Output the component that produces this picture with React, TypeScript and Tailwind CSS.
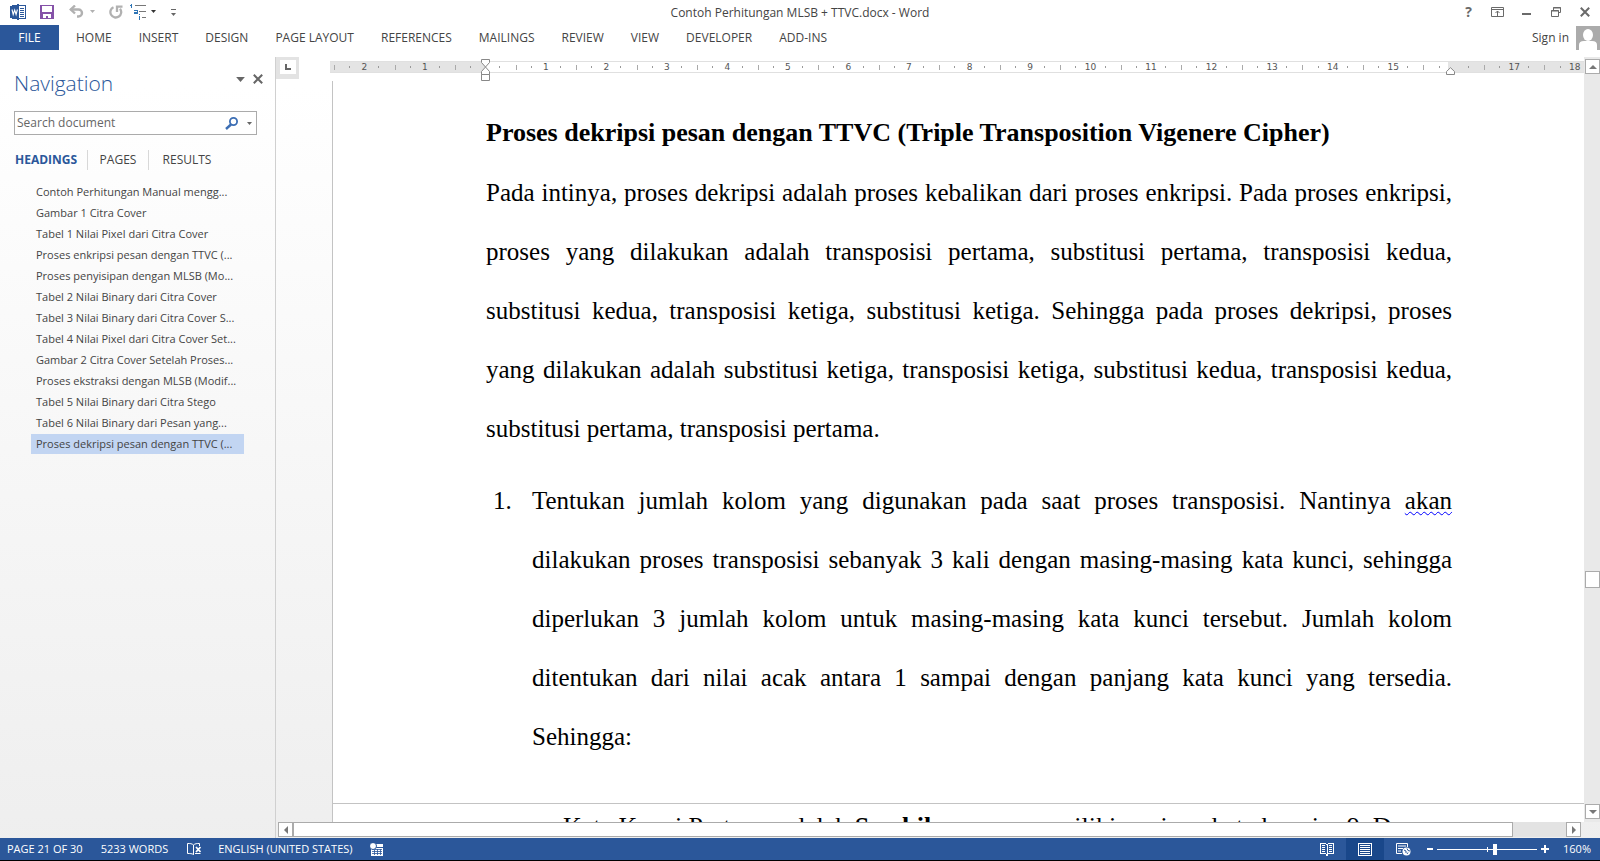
import type { ReactNode } from "react";

const tabs = [
  "HOME",
  "INSERT",
  "DESIGN",
  "PAGE LAYOUT",
  "REFERENCES",
  "MAILINGS",
  "REVIEW",
  "VIEW",
  "DEVELOPER",
  "ADD-INS",
];

const headings = [
  "Contoh Perhitungan Manual mengg...",
  "Gambar 1 Citra Cover",
  "Tabel 1 Nilai Pixel dari Citra Cover",
  "Proses enkripsi pesan dengan TTVC (...",
  "Proses penyisipan dengan MLSB (Mo...",
  "Tabel 2 Nilai Binary dari Citra Cover",
  "Tabel 3 Nilai Binary dari Citra Cover S...",
  "Tabel 4 Nilai Pixel dari Citra Cover Set...",
  "Gambar 2 Citra Cover Setelah Proses...",
  "Proses ekstraksi dengan MLSB (Modif...",
  "Tabel 5 Nilai Binary dari Citra Stego",
  "Tabel 6 Nilai Binary dari Pesan yang...",
  "Proses dekripsi pesan dengan TTVC (...",
];

// one cell per centimetre, centred on its number
const rulerCells = Array.from({ length: 21 }, (_, i) => Math.abs(i - 2));

function WordIcon() {
  return (
    <svg width="16" height="16" viewBox="0 0 16 16" shapeRendering="crispEdges">
      <rect x="8" y="1.5" width="7.5" height="13" fill="#fff" stroke="#2b579a" />
      <path d="M10 4.5h4M10 6.5h4M10 8.5h4M10 10.5h4M10 12.5h4" stroke="#2b579a" />
      <path d="M0 2l9-2v16l-9-2z" fill="#2b579a" />
      <path d="M2 5.5l1.2 5L4.7 6l1.4 4.5 1.3-5" fill="none" stroke="#fff" strokeWidth="1.1" shapeRendering="auto" />
    </svg>
  );
}

function SaveIcon() {
  return (
    <svg width="14" height="14" viewBox="0 0 14 14">
      <path d="M0 0h14v14H0z" fill="#8552a8" />
      <path d="M2 1h10v6H2zM3 9h8v4H8v-2H6v2H3z" fill="#fff" />
    </svg>
  );
}

function UndoIcon() {
  return (
    <svg width="15" height="13" viewBox="0 0 15 13" fill="none" stroke="#b1b1b1" strokeWidth="2.4">
      <path d="M1.5 4.500H9.500a3.500 3.500 0 010 7H8" />
      <path d="M6 .5L1.800 4.500 6 8.500" />
    </svg>
  );
}

function RedoIcon() {
  return (
    <svg width="14" height="14" viewBox="0 0 14 14" fill="none" stroke="#b1b1b1" strokeWidth="2.3">
      <path d="M4.500 2.200a5.400 5.400 0 106.500 1.500" />
      <path d="M8 7V1.600h5.500" />
    </svg>
  );
}

function ListIcon() {
  return (
    <svg width="17" height="16" viewBox="0 0 17 16" shapeRendering="crispEdges" fill="none">
      <path d="M0 1h2M1.500 0v4M4 6h3v3.500H4.500V8H7M9.500 10v1M9.500 12v4" stroke="#2e75b6" />
      <path d="M5 1.500h11M9 7.500h7M12 13.500h4" stroke="#777" />
    </svg>
  );
}

function Caret({ className = "text-[#666]" }: { className?: string }) {
  return (
    <svg width="7" height="4" viewBox="0 0 7 4" className={className}>
      <path d="M0 0h7L3.500 4z" fill="currentColor" />
    </svg>
  );
}

function ProofIcon() {
  return (
    <svg width="14" height="13" viewBox="0 0 14 13" fill="none" stroke="#fff">
      <path d="M6.500 11.500C5 10.500 3 10.500.5 10.500v-10c2.500 0 4.500 0 6 1.500zM6.500 2C8 .5 10 .5 12.500.5V3" />
      <path d="M9 4l4.500 5M13.500 4L9 9" strokeWidth="1.700" />
      <path d="M6.500 2v9.500M8 10.500h5.500" />
    </svg>
  );
}

function MacroIcon() {
  return (
    <svg width="13" height="13" viewBox="0 0 13 13">
      <path d="M6 1h7v3H6zM1 5h12v8H1z" fill="#fff" />
      <path d="M2 6.500h10M2 8.500h10M2 10.500h10M4.500 6v6M7.500 6v6M10.500 6v6" stroke="#2b579a" strokeWidth=".8" />
      <circle cx="3" cy="3" r="3.500" fill="#fff" stroke="#2b579a" />
    </svg>
  );
}

function ReadIcon() {
  return (
    <svg width="14" height="13" viewBox="0 0 14 13" fill="none" stroke="#fff" shapeRendering="crispEdges">
      <path d="M.5.500h5l1.500 1 1.500-1h5v10h-5l-1.500 2-1.500-2h-5zM7 2v11" />
      <path d="M2 2.500h3M2 4.500h3M2 6.500h3M2 8.500h3M9 2.500h3M9 4.500h3M9 6.500h3M9 8.500h3" />
    </svg>
  );
}

function PrintLayoutIcon() {
  return (
    <svg width="14" height="13" viewBox="0 0 14 13" fill="none" stroke="#fff" shapeRendering="crispEdges">
      <path d="M.5.5h13v12H.5z" />
      <path d="M2 2.500h10M2 4.500h10M2 6.500h10M2 8.500h10M2 10.500h10" />
    </svg>
  );
}

function WebLayoutIcon() {
  return (
    <svg width="15" height="13" viewBox="0 0 15 13" fill="none" stroke="#fff">
      <path d="M6 10.500H.5V.5h11V4M2 3h8M2 5.500h5M2 8h3" />
      <circle cx="10.500" cy="8.500" r="4" fill="#fff" stroke="none" />
      <path d="M8 7l2 1v2M11 5.500l1 2 2 .5M11 11l1-1.500" stroke="#2b579a" />
    </svg>
  );
}

function ScrollButton({ label, d }: { label: string; d: string }) {
  return (
    <button aria-label={label} className="flex size-[15px] shrink-0 items-center justify-center border border-[#ababab] bg-white">
      <svg width="8" height="8" viewBox="0 0 8 8">
        <path d={d} fill="#777" />
      </svg>
    </button>
  );
}

function TitleBar() {
  return (
    <header className="grid h-[25px] shrink-0 grid-cols-[1fr_auto_1fr] items-center">
      <div className="flex items-center pb-[2px] pl-[10px]">
        <WordIcon />
        <button aria-label="Save" className="ml-[14px]"><SaveIcon /></button>
        <button aria-label="Undo" className="ml-[15px]"><UndoIcon /></button>
        <button aria-label="Undo list" className="ml-[6px]"><Caret className="h-[3px] w-[5px] text-[#b1b1b1]" /></button>
        <button aria-label="Repeat" className="ml-[14px]"><RedoIcon /></button>
        <button aria-label="Multilevel list" className="ml-[7px] flex items-center gap-1">
          <ListIcon />
          <Caret className="h-[3px] w-[5px] text-[#333]" />
        </button>
        <button aria-label="Customize toolbar" className="ml-[15px] flex flex-col items-center gap-[3px] pt-[2px]">
          <span className="h-px w-[5px] bg-[#666]" />
          <Caret className="h-[3px] w-[5px] text-[#666]" />
        </button>
      </div>
      <h1>Contoh Perhitungan MLSB + TTVC.docx - Word</h1>
      <div className="flex items-center justify-end pr-[10px] pb-[2px] text-[#6a6a6a]">
        <button aria-label="Help" className="text-[14px] leading-4 font-bold">?</button>
        <button aria-label="Ribbon display options" className="ml-[19px]">
          <svg width="13" height="10" viewBox="0 0 13 10" fill="none" stroke="currentColor">
            <path d="M.5.5h12v9H.5zM1 2.500h11M6.500 9V4M4.500 6l2-2 2 2" />
          </svg>
        </button>
        <button aria-label="Minimize" className="ml-[18px]">
          <svg width="9" height="10" viewBox="0 0 9 10"><path d="M0 6h9v2H0z" fill="currentColor" /></svg>
        </button>
        <button aria-label="Restore" className="ml-[20px]">
          <svg width="10" height="10" viewBox="0 0 10 10" fill="none" stroke="currentColor">
            <path d="M2.500 3V.5h7v5H7.500M2 1h8M.5 3.500h7v6h-7zM0 4h8" />
          </svg>
        </button>
        <button aria-label="Close" className="ml-[19px]">
          <svg width="10" height="10" viewBox="0 0 10 10"><path d="M.8.8l8.400 8.400M9.200.8L.8 9.200" stroke="currentColor" strokeWidth="2" /></svg>
        </button>
      </div>
    </header>
  );
}

function TabBar() {
  return (
    <nav className="flex h-[25px] shrink-0 items-center">
      <button className="h-full w-[59px] bg-[#2b579a] text-white">FILE</button>
      <div className="flex gap-[27px] pl-[17px]">
        {tabs.map((tab) => (
          <button key={tab}>{tab}</button>
        ))}
      </div>
      <button className="ml-auto pr-[7px]">Sign in</button>
      <svg width="24" height="24" viewBox="0 0 24 24">
        <path d="M0 0h24v24H0z" fill="#ababab" />
        <ellipse cx="12" cy="9" rx="5" ry="6" fill="#fff" />
        <path d="M3 24v-5q0-4 5-4h8q5 0 5 4v5z" fill="#fff" />
      </svg>
    </nav>
  );
}

function NavigationPane() {
  return (
    <aside className="w-[276px] shrink-0 border-r border-[#d0d0d0] pl-[14px]">
      <div className="flex h-[52px] items-center">
        <h2 className="flex-1 text-[21px] leading-7 font-light text-[#2b579a]">Navigation</h2>
        <button aria-label="Pane options" className="pb-2"><Caret className="h-[5px] w-[9px] text-[#666]" /></button>
        <button aria-label="Close pane" className="mr-3 ml-[8px] pb-2">
          <svg width="10" height="10" viewBox="0 0 10 10"><path d="M.8.8l8.400 8.400M9.200.8L.8 9.200" stroke="#666" strokeWidth="2" /></svg>
        </button>
      </div>
      <div className="mt-[2px] flex h-6 w-[243px] items-center border border-[#ababab] bg-white pr-[4px] pl-[2px]">
        <input aria-label="Search document" placeholder="Search document" className="min-w-0 flex-1 outline-none placeholder:text-[#666]" />
        <button aria-label="Search">
          <svg width="14" height="13" viewBox="0 0 14 13" fill="none" stroke="#3c6eb4">
            <circle cx="8.500" cy="4.500" r="3.600" strokeWidth="1.800" />
            <path d="M6 7.500L1 12" strokeWidth="2.400" />
          </svg>
        </button>
        <button aria-label="Search options" className="ml-[8px]"><Caret className="h-[3px] w-[5px] text-[#666]" /></button>
      </div>
      <div className="mt-[15px] flex h-5 items-center" role="tablist">
        <button role="tab" className="w-[74px] border-r border-[#d8d8d8] pl-px text-left leading-5 font-bold text-[#2b579a]">HEADINGS</button>
        <button role="tab" className="w-[61px] border-r border-[#d8d8d8] leading-5">PAGES</button>
        <button role="tab" className="w-[76px] leading-5">RESULTS</button>
      </div>
      <ul className="mt-3 ml-[17px] w-[213px] text-[11px]">
        {headings.map((heading, i) => (
          <li key={heading} className="h-[21px]">
            <a
              href="#"
              className={
                i === headings.length - 1
                  ? "block h-5 bg-[#c2d5f2] pl-[5px] leading-5 whitespace-nowrap"
                  : "block h-5 pl-[5px] leading-5 whitespace-nowrap"
              }
            >
              {heading}
            </a>
          </li>
        ))}
      </ul>
    </aside>
  );
}

function Ruler() {
  return (
    <div className="flex h-6 shrink-0 items-start">
      <div className="flex h-[22px] w-[23px] shrink-0 items-start justify-center bg-[#e3e3e3] pt-[3px]">
        <button aria-label="Tab stop" className="flex h-[14px] w-4 items-center justify-center bg-white">
          <svg width="6" height="6" viewBox="0 0 6 6"><path d="M0 0h2v4h4v2H0z" fill="#666" /></svg>
        </button>
      </div>
      <div className="relative mt-1 ml-[31px] h-3 min-w-0 flex-1 border-y border-[#e0e0e0] bg-[#e4e4e4]">
        <div className="flex h-full overflow-hidden">
          <div className="ml-[156px] h-full w-[962px] shrink-0 bg-white" />
        </div>
        <div className="absolute inset-0 overflow-x-clip pl-1">
          <div className="grid h-full w-[1271px] grid-cols-[repeat(21,minmax(0,1fr))] font-['DejaVu_Sans',sans-serif] text-[9px] leading-[10px] text-[#555]">
            {rulerCells.map((n, i) => (
              <div key={i} className="flex items-center justify-between">
                <span className="h-[5px] w-px bg-[#aaa]" />
                <span className="h-[2px] w-px bg-[#999]" />
                <span className="flex w-0 justify-center">{n === 0 || n === 16 ? "" : n}</span>
                <span className="h-[2px] w-px bg-[#999]" />
                <span className="w-px" />
              </div>
            ))}
          </div>
        </div>
        <svg className="absolute -top-[3px] left-[151px]" width="10" height="22" viewBox="0 0 10 22" fill="#fff" stroke="#888">
          <path d="M.5.500h8v3l-4 4.500-4-4.500zM.5 15.500v-3L4.500 8l4 4.500v3zM.5 15.500h8v6h-8z" />
        </svg>
        <svg className="absolute top-[5px] left-[1116px]" width="10" height="9" viewBox="0 0 10 9" fill="#fff" stroke="#888">
          <path d="M.5 7.500v-3L4.500.7l4 3.800v3z" />
        </svg>
      </div>
    </div>
  );
}

// a full line, spread to both margins
function Line({ children }: { children: ReactNode }) {
  return <span className="block whitespace-nowrap [text-align-last:justify]">{children}</span>;
}

function DocumentPage() {
  return (
    <main className="ml-14 flex min-h-0 flex-1 flex-col overflow-hidden border-l border-[#c3c3c3] bg-white pl-[153px] font-['Liberation_Serif',serif] text-[25px] leading-[59px] text-black">
      <div className="w-[966px]">
        <h2 className="pt-[22px] text-[26px] font-bold whitespace-nowrap">Proses dekripsi pesan dengan TTVC (Triple Transposition Vigenere Cipher)</h2>
        <p className="pt-px">
          <Line>Pada intinya, proses dekripsi adalah proses kebalikan dari proses enkripsi. Pada proses enkripsi,</Line>
          <Line>proses yang dilakukan adalah transposisi pertama, substitusi pertama, transposisi kedua,</Line>
          <Line>substitusi kedua, transposisi ketiga, substitusi ketiga. Sehingga pada proses dekripsi, proses</Line>
          <Line>yang dilakukan adalah substitusi ketiga, transposisi ketiga, substitusi kedua, transposisi kedua,</Line>
          <span>substitusi pertama, transposisi pertama.</span>
        </p>
        <ol className="mt-[13px] list-none">
          <li className="flex pl-[7px]">
            <span className="w-[39px] shrink-0">1.</span>
            <p className="min-w-0 flex-1">
              <Line>
                Tentukan jumlah kolom yang digunakan pada saat proses transposisi. Nantinya{" "}
                <span className="underline decoration-[#0000ff] decoration-wavy decoration-1 underline-offset-2">akan</span>
              </Line>
              <Line>dilakukan proses transposisi sebanyak 3 kali dengan masing-masing kata kunci, sehingga</Line>
              <Line>diperlukan 3 jumlah kolom untuk masing-masing kata kunci tersebut. Jumlah kolom</Line>
              <Line>ditentukan dari nilai acak antara 1 sampai dengan panjang kata kunci yang tersedia.</Line>
              <span>Sehingga:</span>
            </p>
          </li>
        </ol>
      </div>
      <div className="mt-[37px] -ml-[153px] border-t border-[#c3c3c3] pl-[230px] text-[26px] leading-[46px] whitespace-nowrap">
        Kata Kunci Pertama adalah <b>Sembilan</b> yang memiliki panjang kata kunci = 9. Dan
      </div>
    </main>
  );
}

function StatusBar() {
  return (
    <footer className="flex h-[23px] shrink-0 items-center border-b border-black bg-[#2b579a] pl-[7px] text-[11px] text-white">
      <span>PAGE 21 OF 30</span>
      <span className="ml-[18px]">5233 WORDS</span>
      <button aria-label="Proofing" className="ml-[19px]"><ProofIcon /></button>
      <span className="ml-[17px]">ENGLISH (UNITED STATES)</span>
      <button aria-label="Macros" className="ml-[17px]"><MacroIcon /></button>
      <div className="ml-auto flex h-full items-center">
        <button aria-label="Read mode" className="flex h-full w-[38px] items-center justify-center"><ReadIcon /></button>
        <button aria-label="Print layout" className="flex h-full w-[38px] items-center justify-center bg-[#19478a]"><PrintLayoutIcon /></button>
        <button aria-label="Web layout" className="flex h-full w-[38px] items-center justify-center"><WebLayoutIcon /></button>
        <button aria-label="Zoom out" className="ml-[5px] h-[2px] w-[6px] bg-white" />
        <input
          type="range"
          aria-label="Zoom"
          min={0}
          max={100}
          defaultValue={58}
          className="mx-1 h-[11px] w-[100px] appearance-none bg-[linear-gradient(#fff,#fff),linear-gradient(#fff,#fff)] bg-[length:100%_1px,1px_5px] bg-center bg-no-repeat [&::-webkit-slider-thumb]:h-[11px] [&::-webkit-slider-thumb]:w-1 [&::-webkit-slider-thumb]:appearance-none [&::-webkit-slider-thumb]:bg-white"
        />
        <button aria-label="Zoom in">
          <svg width="8" height="8" viewBox="0 0 8 8"><path d="M3 0h2v3h3v2H5v3H3V5H0V3h3z" fill="#fff" /></svg>
        </button>
        <span className="w-[51px] pr-[9px] text-right">160%</span>
      </div>
    </footer>
  );
}

export default function App() {
  return (
    <div className="flex h-screen flex-col overflow-hidden bg-linear-to-b from-white from-10% to-[#eeeeee] font-['Open_Sans','Noto_Sans',sans-serif] text-[12px] leading-4 text-[#444]">
      <TitleBar />
      <TabBar />
      <div className="mt-[7px] flex min-h-0 flex-1">
        <NavigationPane />
        <div className="flex min-w-0 flex-1 flex-col">
          <div className="flex min-h-0 flex-1">
            <div className="flex min-w-0 flex-1 flex-col">
              <Ruler />
              <DocumentPage />
            </div>
            <div className="flex w-4 flex-col bg-[#e9e9e9] pt-[2px] pb-[3px] pl-px">
              <ScrollButton label="Scroll up" d="M0 6h8L4 2z" />
              <div className="flex flex-1 flex-col">
                <div className="flex-[496]" />
                <div className="h-[17px] w-[15px] border border-[#ababab] bg-white" />
                <div className="flex-[216]" />
              </div>
              <ScrollButton label="Scroll down" d="M0 2h8L4 6z" />
            </div>
          </div>
          <div className="mr-[19px] mb-px ml-[2px] flex h-[15px] shrink-0 bg-[#e3e3e3]">
            <ScrollButton label="Scroll left" d="M6 0v8L2 4z" />
            <div className="mr-[53px] flex-1 border border-[#ababab] bg-white" />
            <ScrollButton label="Scroll right" d="M2 0v8l4-4z" />
          </div>
        </div>
      </div>
      <StatusBar />
    </div>
  );
}
